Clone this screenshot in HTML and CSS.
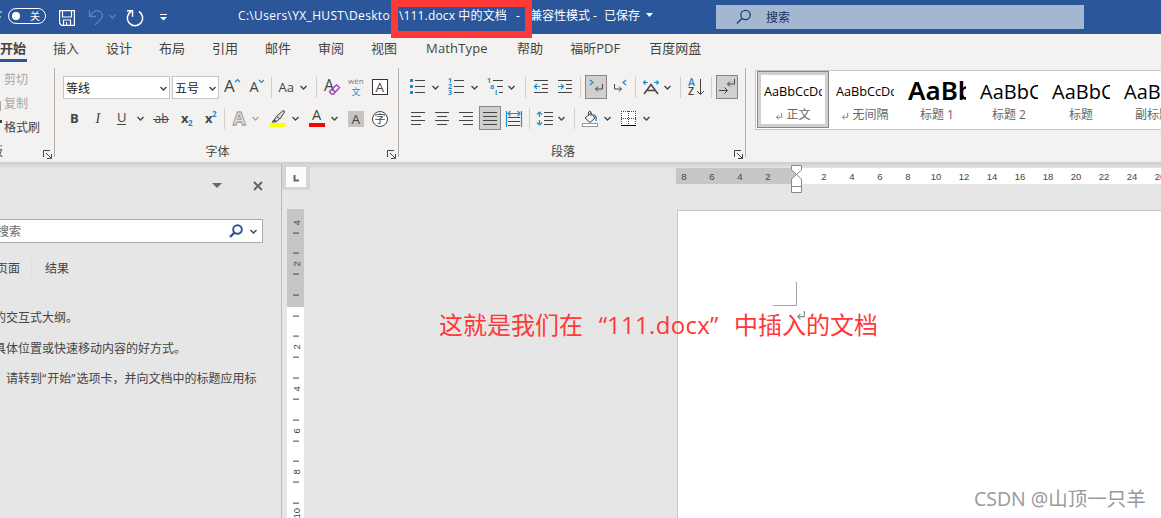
FILE: index.html
```html
<!DOCTYPE html>
<html lang="zh-CN">

<head>
    <meta charset="UTF-8" />
    <meta name="viewport" content="width=device-width, initial-scale=1.0" />
    <title>111.docx 中的文档</title>
    <link rel="stylesheet" href="styles.css">
</head>

<body>
    <svg class="defs">
        <symbol id="chev" viewBox="0 0 12 24"><path d="M3.500 11l3 3 3-3" fill="none" stroke="currentColor" stroke-width="1.4" /></symbol>
        <symbol id="launch" viewBox="0 0 9 9"><path d="M.5 7V.5H7M3 3l5 5M8.500 4v4.500H4" fill="none" stroke="#444" /></symbol>
        <symbol id="ret" viewBox="0 0 9 9"><path d="M7.500 1v5H2M4 3.500L1.500 6 4 8.500" fill="none" stroke="currentColor" /></symbol>
    </svg>

    <header class="titlebar">
        <div class="quick">
            <svg width="52" height="34"><path d="M0 12h2M0 17h1" stroke="#fff" /><rect x="8.500" y="8.500" width="37" height="15" rx="7.500" fill="none" stroke="#fff" /><circle cx="16" cy="16" r="4" fill="#fff" /><text class="toggle-text" x="30" y="20">关</text></svg>
            <svg width="30" height="34" fill="none" stroke="#fff" stroke-width="1.2"><path d="M7.600 10.600h14.800v14.800H9.600l-2-2zM10.500 11v6h9v-6M11.500 25v-5h7v5M14.500 22v3" /></svg>
            <svg width="24" height="34" fill="none" stroke="#5f82b8" stroke-width="1.3"><path d="M7.500 10v6.500h6.500M8 16c3-5 7-6.500 10-4.500s3 5 1 7.500l-6 6" /></svg>
            <svg width="12" height="34" class="dim"><use href="#chev" y="4" width="12" height="24" /></svg>
            <svg width="32" height="34" fill="none" stroke="#fff" stroke-width="1.5"><path d="M13 11.500a7.700 7.700 0 1 0 8 0M9 10.700h5.500v6" /></svg>
            <svg width="28" height="34"><path d="M10 14.500h7" stroke="#fff" /><path d="M10 17h7l-3.500 3.500z" fill="#fff" /></svg>
        </div>
        <div class="doc-title">
            <span class="path">C:\Users\YX_HUST\Deskto</span>
            <span class="file">\111.docx 中的文档</span>
            <span class="dash">-</span>
            <span class="mode">兼容性模式</span>
            <span class="dash2">-</span>
            <span class="saved">已保存</span>
            <svg width="7" height="4"><path d="M0 0h7L3.500 4z" fill="#fff" /></svg>
        </div>
        <div class="search">
            <svg width="16" height="16" fill="none" stroke="#1c3f77" stroke-width="1.3"><circle cx="9.500" cy="6" r="4.700" /><path d="M6 9.500L.8 14.500" /></svg>
            <span>搜索</span>
        </div>
        <div class="red-frame"></div>
    </header>

    <nav class="tabs">
        <span class="active">开始</span>
        <span>插入</span>
        <span>设计</span>
        <span>布局</span>
        <span>引用</span>
        <span>邮件</span>
        <span>审阅</span>
        <span>视图</span>
        <span class="math">MathType</span>
        <span>帮助</span>
        <span class="pdf">福昕PDF</span>
        <span>百度网盘</span>
    </nav>

    <section class="ribbon">
        <div class="group clipboard">
            <div class="clip off">剪切</div>
            <div class="clip off page-bit">复制</div>
            <div class="clip brush-bit">格式刷</div>
            <div class="label clip-label">板</div>
            <svg class="launcher" width="9" height="9"><use href="#launch" /></svg>
        </div>

        <div class="group font-group">
            <div class="row combos">
                <div class="combo font-name">等线<svg width="12" height="24"><use href="#chev" /></svg></div>
                <div class="combo font-size">五号<svg width="12" height="24"><use href="#chev" /></svg></div>
                <svg width="25" height="24"><text x="5" y="17" class="t18">A</text><path d="M16 7l2.500-2.500L21 7" class="blue" /></svg>
                <svg width="24" height="24"><text x="5.500" y="17" class="t15">A</text><path d="M15 5l2.500 2.500L20 5" class="blue" /></svg>
                <i class="sep s33"></i>
                <svg width="22" height="24"><text x="3.500" y="17" class="t13">Aa</text></svg>
                <svg width="12" height="24"><use href="#chev" /></svg>
                <i class="sep s73"></i>
                <svg width="24" height="24"><text x="4" y="16" class="t16">A</text><path d="M10.500 15.500l6-5.500 3 2.500-6 6.500h-2l-2-2zM12 14l3 3" class="eraser" /></svg>
                <svg width="24" height="24"><text x="4" y="9" class="pin">wén</text><text x="7.500" y="20" class="wen">文</text></svg>
                <svg width="24" height="24"><rect x="4.500" y="4.500" width="15" height="15" fill="#fff" stroke="#333" /><text x="7.500" y="17" class="t14">A</text></svg>
            </div>
            <div class="row second">
                <svg width="24" height="24"><text x="8" y="17" class="t13 bold">B</text></svg>
                <svg width="24" height="24"><text x="9.500" y="17" class="t13 serif-i">I</text></svg>
                <svg width="24" height="24"><text x="7" y="16" class="t13">U</text><path d="M7 18.500h9" class="ln" /></svg>
                <svg width="12" height="24"><use href="#chev" /></svg>
                <svg width="28" height="24"><text x="8.500" y="17" class="t12">ab</text><path d="M7 13.500h16" class="ln" /></svg>
                <svg width="24" height="24"><text x="7" y="17" class="t13 bold">x</text><text x="14" y="20" class="tiny">2</text></svg>
                <svg width="24" height="24"><text x="7" y="17" class="t13 bold">x</text><text x="14" y="11" class="tiny">2</text></svg>
                <i class="sep s24"></i>
                <svg width="20" height="24"><text x="4" y="19" class="outline">A</text></svg>
                <svg width="12" height="24" class="pale"><use href="#chev" /></svg>
                <svg width="28" height="24"><rect x="9" y="17" width="16" height="4" fill="#ff0" /><path d="M15.500 10.500l6-5.500q2-1 2 1l-4.500 7zM15.500 10.500l-2.500 3.500-2 2h4l3.500-3" class="ln pen" /><path d="M11 16l2.500-3 2 2z" fill="#444" /></svg>
                <svg width="12" height="24"><use href="#chev" /></svg>
                <svg width="27" height="24"><text x="11" y="14" class="t15">A</text><rect x="8" y="17" width="16" height="4" fill="#f00" /></svg>
                <svg width="12" height="24"><use href="#chev" /></svg>
                <svg width="28" height="24"><rect x="8" y="5" width="16" height="16" fill="#c6c4c2" /><text x="11.500" y="18" class="t14">A</text></svg>
                <svg width="24" height="24"><circle cx="12" cy="13" r="7.500" fill="#fff" stroke="#444" /><text x="6.500" y="17" class="zi">字</text></svg>
            </div>
            <div class="label">字体</div>
            <svg class="launcher" width="9" height="9"><use href="#launch" /></svg>
        </div>

        <div class="group para-group">
            <div class="row">
                <svg width="23" height="24"><path d="M4 4h3v3H4zM4 10h3v3H4zM4 16h3v3H4z" fill="#1e8bcd" /><path d="M9 5.500h10M9 11.500h10M9 17.500h10" class="ln" /></svg>
                <svg width="12" height="24"><use href="#chev" /></svg>
                <svg width="27" height="24"><text x="7" y="8" class="num">1</text><text x="7" y="14" class="num">2</text><text x="7" y="20" class="num">3</text><path d="M13 5.500h10M13 11.500h10M13 17.500h10" class="ln" /></svg>
                <svg width="12" height="24"><use href="#chev" /></svg>
                <svg width="25" height="24"><text x="7" y="8" class="num">1</text><text x="10" y="14" class="num">a</text><text x="15" y="20" class="num">i</text><path d="M13 5.500h10M17 11.500h6M19 17.500h4" class="ln" /></svg>
                <svg width="12" height="24"><use href="#chev" /></svg>
                <i class="sep s83"></i>
                <svg width="24" height="24"><path d="M5 5.500h14M13 9.500h6M13 13.500h6M5 17.500h14" class="ln" /><path d="M11 11.500H5.500M8 9l-2.500 2.500L8 14" class="blue" /></svg>
                <svg width="24" height="24"><path d="M5 5.500h14M13 9.500h6M13 13.500h6M5 17.500h14" class="ln" /><path d="M5 11.500h5.500M8 9l2.500 2.500L8 14" class="blue" /></svg>
                <i class="sep s34"></i>
                <svg width="22" height="24" class="pressed"><path d="M5 5l3 2.500L5 10" class="blue" /><path d="M17.500 9v5h-7M13 11.500L10.500 14l2.500 2.500" class="ln" /></svg>
                <svg width="25" height="24"><path d="M19 5l-3 2.500 3 2.500" class="blue" /><path d="M7.500 9v5h7M12 11.500l2.500 2.500-2.500 2.500" class="ln" /></svg>
                <i class="sep s33"></i>
                <svg width="22" height="24"><path d="M4.500 7.500H9M6.500 5.500l-2 2 2 2M15 7.500h4.500M17.500 5.500l2 2-2 2" class="blue" /><path d="M5 19l7-9.500 7 9.500M8 15.500h8" class="ln thick" /></svg>
                <svg width="12" height="24"><use href="#chev" /></svg>
                <i class="sep s73"></i>
                <svg width="24" height="24"><text x="4" y="11" class="az blue-text">A</text><text x="4" y="20" class="az">Z</text><path d="M16.500 4v15M13 16l3.500 3.500L20 16" class="ln" /></svg>
                <i class="sep s34"></i>
                <svg width="22" height="24" class="pressed"><path d="M18.500 4v5h-7M14 6.500L11.500 9l2.500 2.500M3 15.500h8M8.500 12.500l3 3-3 3" class="ln" /></svg>
            </div>
            <div class="row second">
                <svg width="24" height="24"><path d="M5 6.500h14M5 10.500h10M5 14.500h14M5 18.500h10" class="ln" /></svg>
                <svg width="24" height="24"><path d="M5 6.500h14M7 10.500h10M5 14.500h14M7 18.500h10" class="ln" /></svg>
                <svg width="24" height="24"><path d="M5 6.500h14M9 10.500h10M5 14.500h14M9 18.500h10" class="ln" /></svg>
                <svg width="22" height="24" class="pressed just"><path d="M4 6.500h14M4 10.500h14M4 14.500h14M4 18.500h14" class="ln" /></svg>
                <svg width="24" height="24"><path d="M4.500 5v16M19.500 5v16M6 7.500h12M8.500 5L6 7.500 8.500 10M15.500 5L18 7.500 15.500 10" class="blue" /><path d="M6 11.500h12M6 15.500h12M6 19.500h12" class="ln" /></svg>
                <i class="sep s33"></i>
                <svg width="22" height="24"><path d="M6.500 6v5M4 8.500L6.500 6 9 8.500M6.500 14v5M4 16.500L6.500 19 9 16.500" class="blue" /><path d="M11 6.500h9M11 10.500h9M11 14.500h9M11 18.500h9" class="ln" /></svg>
                <svg width="12" height="24"><use href="#chev" /></svg>
                <i class="sep s74"></i>
                <svg width="22" height="24"><path d="M6 12l6-5 4 5-5 4.500zM9.500 9.500V6q1.500-2 2.500 0v4" class="ln" /><path d="M14 9q4 0 3 6" class="blue thick" /><rect x="3.500" y="17.500" width="15" height="3" fill="#fff" stroke="#999" /></svg>
                <svg width="12" height="24"><use href="#chev" /></svg>
                <svg width="27" height="24"><rect x="8" y="5" width="15" height="15" fill="#fff" /><path d="M8 5.500h15M8.500 5v14M22.500 5v14M15.500 5v14M8 12.500h15" class="ln dots" /><path d="M8 19.500h15" stroke="#000" /></svg>
                <svg width="12" height="24"><use href="#chev" /></svg>
            </div>
            <div class="label">段落</div>
            <svg class="launcher" width="9" height="9"><use href="#launch" /></svg>
        </div>

        <div class="gallery">
            <div class="style selected">
                <div class="sample">AaBbCcDd</div>
                <div class="name"><svg width="8" height="8"><use href="#ret" /></svg> 正文</div>
            </div>
            <div class="style">
                <div class="sample">AaBbCcDd</div>
                <div class="name"><svg width="8" height="8"><use href="#ret" /></svg> 无间隔</div>
            </div>
            <div class="style h1">
                <div class="sample">AaBb</div>
                <div class="name">标题 1</div>
            </div>
            <div class="style h2">
                <div class="sample">AaBbC</div>
                <div class="name">标题 2</div>
            </div>
            <div class="style h2">
                <div class="sample">AaBbC</div>
                <div class="name">标题</div>
            </div>
            <div class="style h2">
                <div class="sample">AaBbC</div>
                <div class="name">副标题</div>
            </div>
        </div>
    </section>

    <main class="workspace">
        <aside class="nav-pane">
            <div class="pane-head">
                <svg width="10" height="6"><path d="M0 0h10L5 5z" fill="#666" /></svg>
                <svg width="12" height="12"><path d="M2 2l8 8M10 2l-8 8" stroke="#666" stroke-width="2" /></svg>
            </div>
            <div class="pane-search">
                <span>搜索</span>
                <svg width="15" height="15"><circle cx="8.500" cy="5.500" r="4.300" fill="none" stroke="#2b579a" stroke-width="2" /><path d="M5.500 8.500L1 13" stroke="#2b579a" stroke-width="2.400" /></svg>
                <svg width="12" height="24"><use href="#chev" /></svg>
            </div>
            <div class="pane-tabs"><span>页面</span><i></i><span>结果</span></div>
            <p>的交互式大纲。</p>
            <p>具体位置或快速移动内容的好方式。</p>
            <p>，请转到<span class="sq">“</span>开始<span class="sq">”</span>选项卡，并向文档中的标题应用标</p>
        </aside>

        <div class="side-ruler">
            <div class="corner"><svg width="20" height="20"><path d="M8.500 8v5.500H13" fill="none" stroke="#666" stroke-width="2" /></svg></div>
            <div class="vruler">
                <div class="vcells">
                    <span>4</span><span>2</span><span></span><span>2</span><span>4</span><span>6</span><span>8</span><span>10</span>
                </div>
            </div>
        </div>

        <div class="canvas">
            <div class="hruler">
                <div class="margin-part"><span>8</span><span>6</span><span>4</span><span>2</span></div>
                <div class="text-part">
                    <span>2</span><span>4</span><span>6</span><span>8</span><span>10</span><span>12</span><span>14</span><span>16</span><span>18</span><span>20</span><span>22</span><span>24</span><span>26</span>
                </div>
                <svg class="indent" width="12" height="29" fill="#fff" stroke="#888"><path d="M.5.5h10v4.500l-5 4.500-5-4.500zM.5 18v-4l5-4.500 5 4.500v4M.5 18v9.500h10V18M.5 21.500h10" /></svg>
            </div>
            <div class="page">
                <div class="crop"></div>
                <svg class="para-mark" width="10" height="10"><use href="#ret" /></svg>
                <div class="watermark">CSDN @山顶一只羊</div>
            </div>
            <div class="note"><span>这就是我们在</span><span class="q open">“</span><span class="docx">111.docx</span><span class="q">”</span><span>中插入的文档</span></div>
        </div>
    </main>
</body>

</html>
```
FILE: styles.css
```css
* {
    box-sizing: border-box;
}

body {
    margin: 0;
    width: 1161px;
    height: 518px;
    overflow: hidden;
    font-family: "Open Sans", "Noto Sans CJK SC", sans-serif;
    font-size: 12px;
    color: #444;
    background: #e6e6e6;
}

svg {
    flex: none;
    display: block;
    color: #444;
}

.defs {
    width: 0;
    height: 0;
    position: absolute;
}

/* Title bar */
.titlebar {
    position: relative;
    display: flex;
    height: 34px;
    background: #2b579a;
    color: #fff;
}

.quick {
    display: flex;
    width: 238px;
}

.dim {
    color: #5f82b8;
}

.toggle-text {
    font-size: 10px;
    fill: #fff;
}

.doc-title {
    display: flex;
    align-items: center;
    width: 478px;
    height: 30px;
    white-space: nowrap;
}

.path {
    width: 161px;
    letter-spacing: 0.33px;
}

.file {
    width: 117px;
    letter-spacing: 0.15px;
}

.dash {
    width: 14px;
}

.mode {
    width: 63px;
}

.dash2 {
    width: 11px;
}

.saved {
    width: 42px;
}

.search {
    display: flex;
    align-items: center;
    width: 368px;
    height: 24px;
    margin-top: 5px;
    padding-left: 20px;
    gap: 14px;
    background: #a3b7d1;
    color: #14305f;
}

.red-frame {
    position: absolute;
    left: 391px;
    top: 0;
    width: 141px;
    height: 38px;
    border: 7px solid #ff3838;
    z-index: 2;
}

/* Tabs */
.tabs {
    display: flex;
    gap: 27px;
    height: 34px;
    background: #f3f2f1;
    font-size: 13px;
    line-height: 28px;
    white-space: nowrap;
}

.tabs .active {
    width: 27px;
    height: 28px;
    margin-right: -1px;
    font-weight: bold;
    border-bottom: 3px solid #2b579a;
}

.math {
    width: 66px;
    padding-left: 2px;
    letter-spacing: 0.15px;
}

.pdf {
    width: 52px;
}

/* Ribbon */
.ribbon {
    display: flex;
    height: 96px;
    background: #f3f2f1;
    border-bottom: 2px solid #d2d0ce;
}

.group {
    position: relative;
    flex: none;
    height: 89px;
    border-right: 1px solid #b3b0ad;
}

.clipboard {
    width: 55px;
}

.clip {
    position: relative;
    height: 24px;
    padding-left: 4px;
    line-height: 24px;
}

.off {
    color: #a9a7a5;
}

.page-bit::before {
    content: "";
    position: absolute;
    left: 0;
    top: 9px;
    width: 1px;
    height: 10px;
    background: #a9a7a5;
}

.brush-bit::before {
    content: "";
    position: absolute;
    left: 0;
    top: 4px;
    width: 2px;
    height: 3px;
    background: #444;
}

.font-group {
    width: 344px;
    padding: 7px 0 0 8px;
}

.para-group {
    width: 347px;
    padding: 7px 0 0 7px;
}

.row {
    display: flex;
    height: 24px;
}

.second {
    margin-top: 7px;
}

.font-group .second {
    margin-left: -1px;
}

.combo {
    display: flex;
    flex: none;
    align-items: center;
    justify-content: space-between;
    height: 23px;
    margin: 1px 2px 0 0;
    padding-left: 2px;
    border: 1px solid #c8c6c4;
    background: #fff;
    color: #222;
}

.font-name {
    width: 107px;
}

.font-size {
    width: 47px;
    margin-right: 0;
}

.label {
    position: absolute;
    left: 0;
    right: 18px;
    bottom: -4px;
    height: 18px;
    line-height: 18px;
    text-align: center;
}

.clip-label {
    left: -9px;
    text-align: left;
}

.launcher {
    position: absolute;
    right: 2px;
    bottom: -2px;
}

.sep {
    flex: none;
    width: 1px;
    height: 21px;
    margin-top: 2px;
    background: #d0cecc;
}

.s33 { margin-left: 3px; margin-right: 3px; }
.s73 { margin-left: 7px; margin-right: 3px; }
.s74 { margin-left: 7px; margin-right: 4px; }
.s24 { margin-left: 2px; margin-right: 4px; }
.s83 { margin-left: 8px; margin-right: 3px; }
.s34 { margin-left: 3px; margin-right: 4px; }

.row text { fill: #444; }
.t18 { font-size: 17px; }
.t16 { font-size: 16px; }
.t15 { font-size: 14.5px; }
.t14 { font-size: 13.5px; }
.t13 { font-size: 13px; }
.t12 { font-size: 12px; }
.bold { font-weight: bold; }

.serif-i {
    font-family: "Liberation Serif", serif;
    font-style: italic;
    font-size: 14px;
}

.row .tiny {
    font-size: 8px;
    font-weight: bold;
    fill: #1e8bcd;
}

.row .num {
    font-size: 7px;
    font-weight: bold;
    fill: #1e8bcd;
}

.row .pin {
    font-size: 8px;
    fill: #777;
}

.row .wen {
    font-size: 9px;
    fill: #1e8bcd;
}

.zi {
    font-size: 11px;
}

.az {
    font-size: 10.5px;
    font-weight: 600;
}

.row .blue-text {
    fill: #1e8bcd;
}

.row .outline {
    font-size: 18px;
    font-weight: bold;
    fill: #f3f2f1;
    stroke: #a5a5a5;
    stroke-width: 1.3;
}

.pale {
    color: #aaa;
}

.ln {
    stroke: #444;
    fill: none;
}

.pen {
    fill: #ddd;
}

.blue,
.eraser {
    fill: none;
}

.blue {
    stroke: #1e8bcd;
    stroke-width: 1.2;
}

.eraser {
    stroke: #a341b0;
    stroke-width: 1.4;
}

.thick {
    stroke-width: 1.5;
}

.dots {
    stroke-dasharray: 1 1;
}

.pressed {
    height: 24px;
    background: #d2d0ce;
    outline: 1px solid #8a8886;
    outline-offset: -1px;
}

.just {
    margin: 0 1px;
}

/* Style gallery */
.gallery {
    display: flex;
    flex: none;
    width: 420px;
    height: 60px;
    margin: 2px 0 0 9px;
    padding-left: 1px;
    border: 1px solid #c8c6c4;
    background: #fff;
    overflow: hidden;
}

.style {
    flex: none;
    width: 72px;
    height: 57px;
    padding: 2px 6px;
    border: 1px solid transparent;
    text-align: center;
}

.selected {
    border-color: #8a8886;
    box-shadow: inset 0 0 0 3px #d2d0ce;
}

.sample {
    height: 32px;
    overflow: hidden;
    text-align: left;
    white-space: nowrap;
    font-size: 12.7px;
    line-height: 35px;
    color: #000;
}

.h1 .sample {
    font-family: "Noto Sans", sans-serif;
    font-size: 26px;
    font-weight: 600;
    line-height: 33px;
}

.h2 .sample {
    font-size: 20px;
    line-height: 35px;
}

.name {
    display: flex;
    justify-content: center;
    align-items: center;
    gap: 3px;
    height: 18px;
    margin-top: -1px;
    white-space: nowrap;
    color: #666;
}

.name svg {
    margin-top: 3px;
    color: #777;
}

/* Workspace */
.workspace {
    display: flex;
    height: 354px;
    background: linear-gradient(#d4d4d4, #e6e6e6 5px);
}

.nav-pane {
    width: 282px;
    border-right: 1px solid #bcbcbc;
    overflow: hidden;
}

.pane-head {
    display: flex;
    align-items: center;
    gap: 30px;
    height: 44px;
    padding-left: 212px;
}

.pane-search {
    display: flex;
    align-items: center;
    width: 265px;
    height: 24px;
    margin: 11px 0 0 -2px;
    border: 1px solid #ababab;
    background: #fff;
}

.pane-search span {
    width: 232px;
    margin-left: -2px;
    color: #666;
}

.pane-search svg + svg {
    margin-left: 3px;
}

.pane-tabs {
    display: flex;
    align-items: center;
    height: 24px;
    margin: 13px 0 26px -4px;
}

.pane-tabs i {
    width: 1px;
    height: 20px;
    margin: 0 13px 0 11px;
    background: #dedede;
}

.nav-pane p {
    width: 400px;
    height: 24px;
    margin: 0 0 6.5px -6px;
    line-height: 24px;
    white-space: nowrap;
}

.sq {
    letter-spacing: 1px;
}

.side-ruler {
    width: 28px;
}

.corner {
    width: 28px;
    height: 26px;
    padding: 3px 4px;
    background: #d6d6d6;
}

.corner svg {
    background: #fcfcfc;
}

.vruler {
    width: 17px;
    height: 309px;
    margin: 19px 0 0 5px;
    overflow: hidden;
    background: linear-gradient(#c6c6c6 98px, #fff 98px);
}

.vcells {
    margin-top: -7.3px;
}

.vcells span {
    display: flex;
    align-items: center;
    justify-content: center;
    width: 21px;
    height: 41.6px;
    font: 9.5px "Liberation Sans", sans-serif;
    writing-mode: vertical-rl;
    transform: rotate(180deg);
    margin-left: -1px;
    background: linear-gradient(#444, #444) 8px 10px / 6px 1px no-repeat, linear-gradient(#444, #444) 8px 31px / 6px 1px no-repeat;
}

.vcells span:first-child {
    background: linear-gradient(#444, #444) 8px 10px / 6px 1px no-repeat;
}

.canvas {
    position: relative;
    width: 851px;
    padding: 4px 0 0 366px;
}

.hruler {
    position: relative;
    display: flex;
    height: 16px;
    font: 9.5px/17px "Liberation Sans", sans-serif;
}

.hruler span {
    flex: none;
    width: 28px;
    text-align: center;
}

.margin-part {
    display: flex;
    width: 121px;
    background: #c6c6c6;
}

.margin-part span:first-child {
    margin-left: -6px;
}

.text-part {
    display: flex;
    width: 364px;
    padding-left: 13px;
    overflow: hidden;
    background: #fff;
}

.indent {
    position: absolute;
    left: 115px;
    top: -3px;
}

.page {
    position: relative;
    width: 500px;
    height: 320px;
    margin: 26px 0 0 1px;
    border: 1px solid #c6c6c6;
    background: #fff;
}

.crop {
    width: 24px;
    height: 24px;
    margin: 71px 0 0 95px;
    border-right: 1px solid #a6a6a6;
    border-bottom: 1px solid #a6a6a6;
}

.para-mark {
    margin: 4px 0 0 118px;
    color: #888;
}

.watermark {
    position: absolute;
    left: 296px;
    top: 275px;
    font-size: 19.5px;
    line-height: 26px;
    white-space: nowrap;
    color: #999;
}

.note {
    position: absolute;
    left: 129px;
    top: 144px;
    display: flex;
    font-size: 24px;
    line-height: 34px;
    white-space: nowrap;
    color: #ff3838;
}

.q {
    width: 24px;
}

.open {
    text-align: right;
}

.docx {
    width: 103px;
    letter-spacing: 0.3px;
}
```
